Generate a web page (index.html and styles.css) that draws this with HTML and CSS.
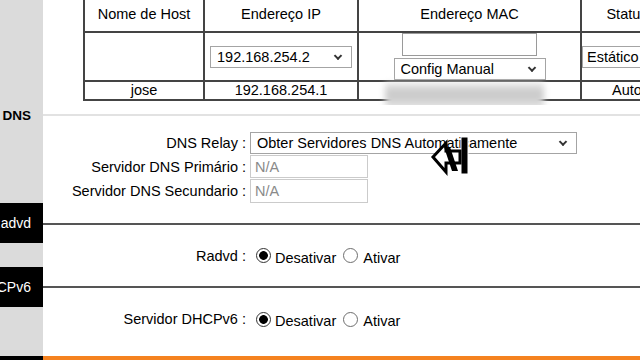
FILE: index.html
```html
<!DOCTYPE html>
<html lang="pt">

<head>
   <meta charset="UTF-8">
   <meta name="viewport" content="width=device-width, initial-scale=1.0">
   <title>LAN - DHCP e DNS</title>
   <link rel="stylesheet" href="styles.css">
</head>

<body>
   <div class="row row-table">
      <div class="side"></div>
      <div class="main">
         <table class="hosts">
            <colgroup>
               <col class="c-host">
               <col class="c-ip">
               <col class="c-mac">
               <col class="c-status">
            </colgroup>
            <tr class="r-head">
               <th>Nome de Host</th>
               <th>Endereço IP</th>
               <th>Endereço MAC</th>
               <th>Status</th>
            </tr>
            <tr class="r-edit">
               <td></td>
               <td>
                  <div class="sel sel-ip"><select><option>192.168.254.2</option></select></div>
               </td>
               <td>
                  <div class="stack">
                     <input type="text" class="mac">
                     <div class="sel sel-mac"><select><option>Config Manual</option></select></div>
                  </div>
               </td>
               <td>
                  <div class="sel sel-status"><select><option>Estático</option></select></div>
               </td>
            </tr>
            <tr class="r-data">
               <td>jose</td>
               <td>192.168.254.1</td>
               <td class="masked"><span class="blur"></span></td>
               <td>Auto</td>
            </tr>
         </table>
      </div>
   </div>

   <div class="row head head-dns">
      <div class="side"><span>DNS</span></div>
      <div class="main"><div class="rule"></div></div>
   </div>
   <div class="row body-dns">
      <div class="side"></div>
      <div class="main form">
         <label for="relay">DNS Relay :</label>
         <div class="sel sel-relay"><select id="relay"><option>Obter Servidores DNS Automaticamente</option></select></div>
         <label for="dns1">Servidor DNS Primário :</label>
         <input type="text" id="dns1" class="na" value="N/A">
         <label for="dns2">Servidor DNS Secundario :</label>
         <input type="text" id="dns2" class="na na-2" value="N/A">
      </div>
   </div>

   <div class="row head head-tab head-radvd">
      <div class="side"><span>Radvd</span></div>
      <div class="main"><div class="rule"></div></div>
   </div>
   <div class="row body-radvd">
      <div class="side"></div>
      <div class="main form">
         <label>Radvd :</label>
         <div class="choices">
            <input type="radio" name="radvd" id="radvdOff" class="radio" checked><label for="radvdOff">Desativar</label>
            <input type="radio" name="radvd" id="radvdOn" class="radio"><label for="radvdOn">Ativar</label>
         </div>
      </div>
   </div>

   <div class="row head head-tab">
      <div class="side"><span>DHCPv6</span></div>
      <div class="main"><div class="rule"></div></div>
   </div>
   <div class="row body-dhcp">
      <div class="side"></div>
      <div class="main form">
         <label>Servidor DHCPv6 :</label>
         <div class="choices">
            <input type="radio" name="dhcp6" id="dhcpOff" class="radio" checked><label for="dhcpOff">Desativar</label>
            <input type="radio" name="dhcp6" id="dhcpOn" class="radio"><label for="dhcpOn">Ativar</label>
         </div>
      </div>
   </div>

   <div class="row foot">
      <div class="side"></div>
      <div class="main"></div>
   </div>

   <svg class="cursor" width="40" height="42" viewBox="0 0 40 42">
      <rect x="31" y="2" width="7" height="37" fill="#000" stroke="#fff" stroke-width="1"/>
      <polygon points="3,22 16,8 16,16 30,16 30,28 16,28 16,37" fill="#fff" stroke="#000" stroke-width="3" stroke-linejoin="miter"/>
      <polygon points="14,12 20,12 28,36 22,36" fill="#000"/>
   </svg>
</body>

</html>
```

FILE: styles.css
```css
html,
body {
   margin: 0;
   padding: 0;
}

html {
   overflow: hidden;
}

body {
   font-family: 'Liberation Sans', Arial, sans-serif;
   font-size: 14.5px;
   color: #000;
   background: #fff;
   width: 640px;
   position: relative;
}

.row {
   display: flex;
}

.side {
   width: 43px;
   flex: none;
   box-sizing: border-box;
   padding-right: 12px;
   background: #dbdbdb;
   display: flex;
   justify-content: flex-end;
   align-items: center;
   overflow: hidden;
   white-space: nowrap;
   font-size: 14px;
}

.main {
   flex: 1;
   min-width: 0;
   overflow: hidden;
}

/* host table */
.row-table .main {
   height: 105px;
}

.hosts {
   border-collapse: collapse;
   table-layout: fixed;
   width: 589px;
   margin: -10px 0 0 40px;
}

.c-host {
   width: 120px;
}

.c-ip {
   width: 154px;
}

.c-mac {
   width: 223px;
}

.c-status {
   width: 92px;
}

.hosts th,
.hosts td {
   border: 2px solid #444;
   padding: 0;
   text-align: center;
   font-weight: normal;
}

.r-head {
   height: 41px;
}

.r-head th {
   padding-top: 4px;
}

.r-edit {
   height: 49px;
}

.r-data {
   height: 19px;
}

.r-data td {
   padding-bottom: 1px;
}

.stack {
   display: flex;
   flex-direction: column;
   align-items: center;
   gap: 2px;
}

.masked {
   position: relative;
}

.blur {
   position: absolute;
   left: 26px;
   right: 36px;
   top: 1px;
   height: 27px;
   background: linear-gradient(#e6e6e6, #c8c8c8 40%, #d2d2d2 65%, #ededed);
   filter: blur(3px);
}

/* form controls */
.sel {
   position: relative;
   display: inline-block;
   vertical-align: middle;
}

.sel::after {
   content: "";
   position: absolute;
   right: 11px;
   top: 50%;
   width: 4px;
   height: 4px;
   border-right: 2px solid #333;
   border-bottom: 2px solid #333;
   transform: translateY(-70%) rotate(45deg);
   pointer-events: none;
}

select {
   appearance: none;
   -webkit-appearance: none;
   font: inherit;
   color: #000;
   background: #fff;
   border: 1px solid #a4a4a4;
   border-radius: 0;
   height: 22px;
   padding: 0 20px 0 6px;
   box-sizing: border-box;
   display: block;
}

.sel-ip select {
   width: 142px;
}

.sel-mac select {
   width: 152px;
}

.sel-status select {
   width: 91px;
   padding-left: 4px;
}

.sel-relay select {
   width: 327px;
}

input.mac {
   width: 135px;
   height: 23px;
   box-sizing: border-box;
   border: 1px solid #9a9a9a;
   padding: 0;
   display: block;
}

input.na {
   width: 118px;
   height: 23px;
   box-sizing: border-box;
   border: 1px solid #cbcbcb;
   font: inherit;
   color: #8a8a8a;
   padding: 0 4px;
}

input.na-2 {
   height: 24px;
}

/* sections */
.head-dns .side {
   font-weight: bold;
   font-size: 13.5px;
}

.head-dns .main {
   height: 20px;
   display: flex;
   align-items: center;
}

.head-dns .rule {
   flex: 1;
   height: 2px;
   background: #e2e2e2;
}

.head-tab .side {
   background: #000;
   color: #fff;
}

.head-tab .main {
   height: 40px;
   display: flex;
   align-items: center;
}

.head-radvd .rule {
   margin-top: 2px;
}

.head-tab .rule {
   flex: 1;
   height: 2px;
   background: #555;
}

.form {
   display: grid;
   grid-template-columns: 203px auto;
   column-gap: 4px;
   row-gap: 1px;
   align-items: center;
   justify-content: start;
}

.form > label {
   text-align: right;
   white-space: nowrap;
}

.body-dns .form {
   padding-top: 7px;
   height: 78px;
   box-sizing: border-box;
   align-content: start;
}

.body-radvd .form {
   height: 24px;
   padding-top: 1px;
   box-sizing: border-box;
}

.body-dhcp .form {
   height: 49px;
   grid-template-rows: 24px;
   align-content: start;
}

.choices {
   display: flex;
   align-items: center;
   margin-left: 6px;
}

.choices label {
   padding-top: 4px;
}

.radio {
   appearance: none;
   -webkit-appearance: none;
   width: 15px;
   height: 15px;
   margin: 0 4px 0 0;
   border: 1px solid #6e6e6e;
   border-radius: 50%;
   background: #fff;
   box-sizing: border-box;
}

.radio:checked {
   border-color: #333;
   background: radial-gradient(circle, #000 0 4px, #fff 4.7px);
}

.radio + label + .radio {
   margin-left: 7px;
   margin-right: 5px;
}

.foot .side {
   background: #000;
   height: 10px;
}

.foot .main {
   background: #f5821f;
}

.cursor {
   position: absolute;
   left: 430px;
   top: 135px;
}
```
